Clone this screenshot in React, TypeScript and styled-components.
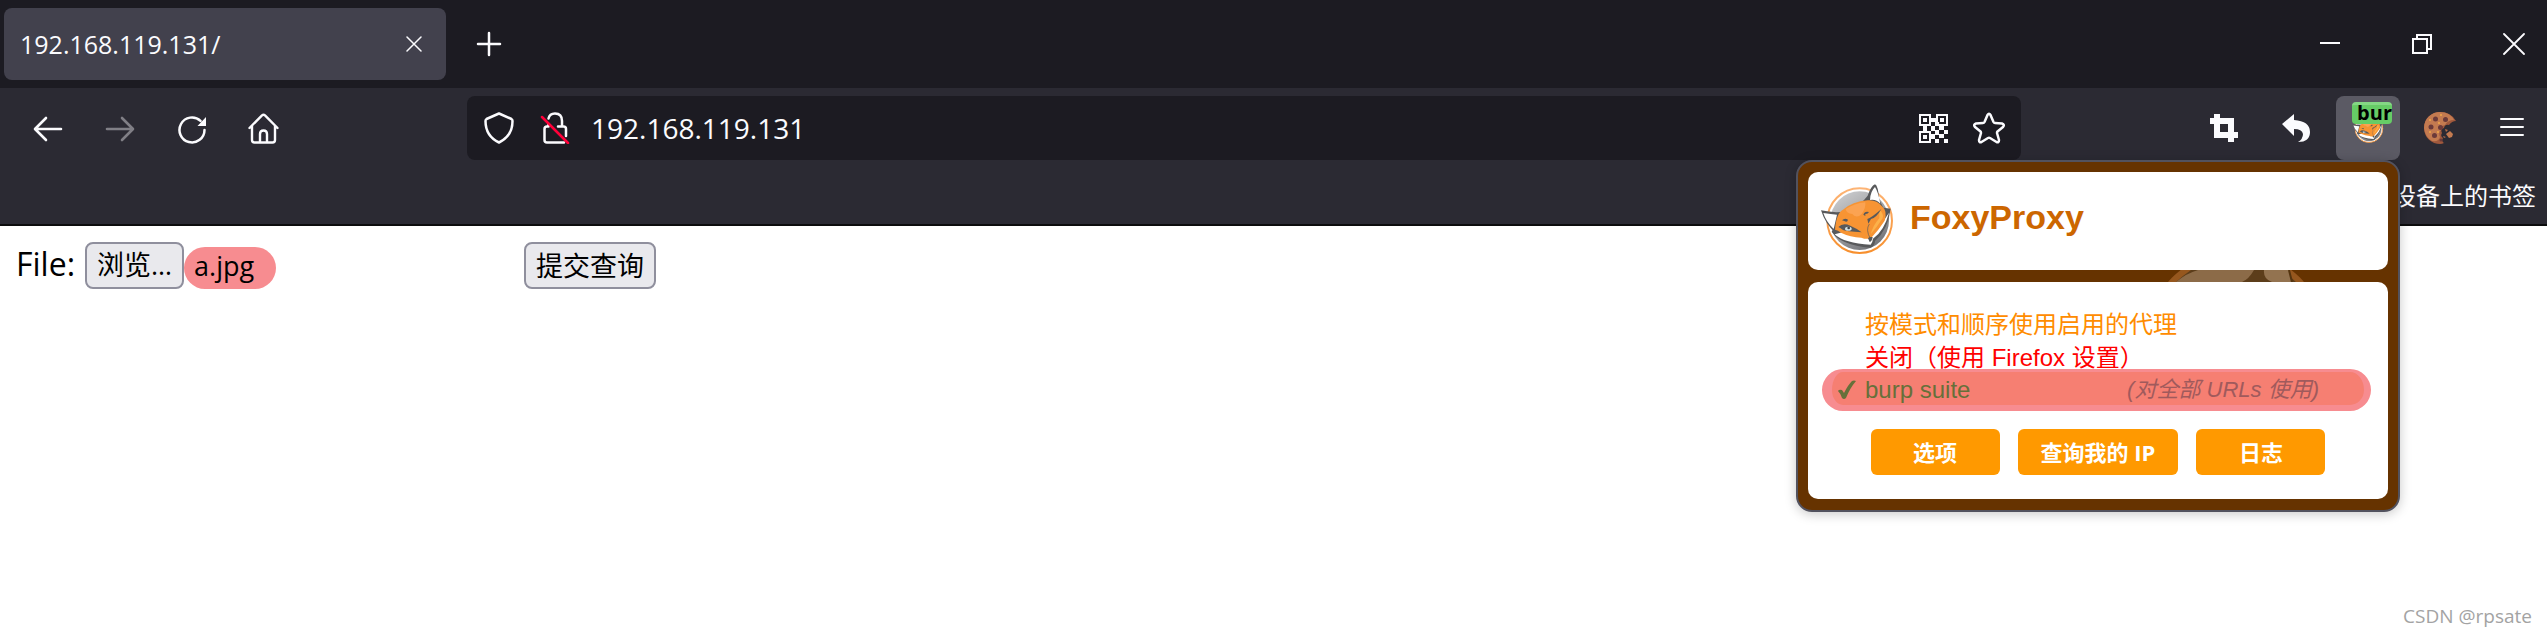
import React from "react";
import styled, { createGlobalStyle } from "styled-components";

const GlobalStyle = createGlobalStyle`
  *, *::before, *::after { box-sizing: border-box; }
  body {
    margin: 0;
    background: #ffffff;
    font-family: "Open Sans", "Noto Sans CJK SC", sans-serif;
  }
  button, input { font: inherit; }
`;

const Window = styled.div`
  display: flex;
  flex-direction: column;
  min-height: 100vh;
  overflow: hidden;
`;

const TabBar = styled.header`
  display: flex;
  align-items: center;
  height: 88px;
  padding-left: 4px;
  background: #1c1b22;
  color: #fbfbfe;
`;

const Tab = styled.div`
  display: flex;
  align-items: center;
  justify-content: space-between;
  width: 442px;
  height: 72px;
  margin-right: 11px;
  padding: 0 12px 0 16px;
  border-radius: 8px;
  background: #42414d;
  font-size: 25px;
  line-height: 32px;
`;

const IconButton = styled.button<{ $width?: number; $active?: boolean; $dim?: boolean }>`
  display: flex;
  flex: none;
  align-items: center;
  justify-content: center;
  width: ${(p) => p.$width ?? 64}px;
  height: 64px;
  padding: 0;
  border: 0;
  border-radius: 8px;
  background: ${(p) => (p.$active ? "#5b5a64" : "transparent")};
  color: ${(p) => (p.$dim ? "#807f86" : "#fbfbfe")};
`;

const WindowControls = styled.div`
  display: flex;
  gap: 26px;
  margin-left: auto;
`;

const Toolbar = styled.nav`
  display: flex;
  align-items: center;
  gap: 8px;
  height: 80px;
  padding: 0 3px 0 16px;
  background: #2b2a33;
`;

const Spacer = styled.div`
  flex: 0 1 155px;
`;

const UrlBar = styled.div`
  display: flex;
  flex: 1;
  align-items: center;
  min-width: 400px;
  height: 64px;
  padding: 0 4px;
  border-radius: 8px;
  background: #1c1b22;
`;

const UrlInput = styled.input`
  flex: 1;
  min-width: 0;
  padding: 0 8px;
  border: 0;
  outline: 0;
  background: transparent;
  color: #fbfbfe;
  font-size: 28px;
`;

const Extension = styled.div`
  position: relative;
`;

const Badge = styled.span`
  position: absolute;
  top: 6px;
  right: 8px;
  width: 40px;
  height: 22px;
  border-top: 3px solid #84d884;
  border-radius: 4px;
  background: #66cc66;
  color: #000000;
  font-size: 20px;
  font-weight: 700;
  line-height: 16px;
  text-align: right;
  pointer-events: none;
`;

const BookmarkBar = styled.div`
  display: flex;
  align-items: center;
  justify-content: flex-end;
  height: 58px;
  padding-right: 11px;
  border-bottom: 2px solid #0c0c0d;
  background: #2b2a33;
`;

const Bookmark = styled.a`
  color: #fbfbfe;
  font-size: 24px;
  line-height: 56px;
  text-decoration: none;
`;

const Page = styled.main`
  display: flex;
  flex: 1;
  flex-direction: column;
  justify-content: space-between;
  padding: 16px 15px 0 16px;
`;

const UploadForm = styled.form`
  display: flex;
  align-items: center;
  gap: 10px;
`;

const FieldName = styled.label`
  font-size: 32px;
  line-height: 42px;
  padding-bottom: 4px;
`;

const FilePicker = styled.div`
  position: relative;
  display: flex;
  align-items: flex-end;
  width: 429px;
`;

const HiddenFile = styled.input`
  position: absolute;
  inset: 0;
  width: 100%;
  opacity: 0;
`;

const FormButton = styled.button`
  height: 47px;
  padding: 0 10px;
  border: 2px solid #8f8f9d;
  border-radius: 8px;
  background: #e9e9ed;
  color: #000000;
  font-size: 27px;
  line-height: 42px;
  white-space: nowrap;
`;

const FileName = styled.span`
  height: 42px;
  padding: 0 22px 0 10px;
  border-radius: 21px;
  background: #f78c90;
  font-size: 27px;
  line-height: 38px;
`;

const Credit = styled.footer`
  align-self: flex-end;
  color: #a3a3a3;
  font-size: 19px;
  line-height: 42px;
`;

const Popup = styled.section`
  position: absolute;
  z-index: 2;
  top: 64px;
  right: 0;
  width: 604px;
  padding: 10px 10px 11px;
  border: 2px solid #52525e;
  border-radius: 16px;
  background: #663300;
  box-shadow: 0 2px 12px rgba(0, 0, 0, 0.22);
  color: #333333;
  font-family: "Liberation Sans", "Noto Sans CJK SC", sans-serif;
  font-size: 24px;
`;

const PopupHeader = styled.header`
  display: flex;
  align-items: flex-start;
  gap: 15px;
  height: 98px;
  padding: 11px 12px;
  border-radius: 10px;
  background: #ffffff;
`;

const PopupTitle = styled.h1`
  margin: 0;
  color: #cc6600;
  font-size: 34px;
  line-height: 68px;
`;

const Divider = styled.div`
  display: flex;
  justify-content: flex-end;
  height: 12px;
  padding-right: 82px;
`;

const PopupBody = styled.div`
  padding: 26px 17px 24px 14px;
  border-radius: 10px;
  background: #ffffff;
`;

const ModeList = styled.ul`
  margin: 0;
  padding: 0;
  list-style: none;
`;

const Mode = styled.button<{ $color: string }>`
  display: block;
  height: 33px;
  padding: 0 0 0 43px;
  border: 0;
  background: transparent;
  color: ${(p) => p.$color};
  line-height: 33px;
  white-space: nowrap;
`;

const SelectedMode = styled.button`
  display: flex;
  align-items: center;
  width: 100%;
  height: 42px;
  margin-top: -5px;
  padding: 2px 45px 0 5px;
  border: solid #f78c90;
  border-width: 3px 7px 6px 10px;
  border-radius: 21px;
  background: #f67f72;
  color: #66703a;
  line-height: 31px;
`;

const CheckSlot = styled.span`
  display: flex;
  width: 28px;
`;

const Note = styled.em`
  margin-left: auto;
  color: #a05a5c;
  font-size: 22px;
`;

const Actions = styled.div`
  display: flex;
  justify-content: center;
  gap: 18px;
  margin-top: 18px;
  padding-left: 3px;
`;

const Action = styled.button`
  min-width: 129px;
  height: 46px;
  padding: 0 23px;
  border: 0;
  border-radius: 6px;
  background: #ff9900;
  color: #ffffff;
  font-family: "Open Sans", "Noto Sans CJK SC", sans-serif;
  font-size: 22px;
  font-weight: 700;
  line-height: 46px;
  white-space: nowrap;
`;

type IconProps = { size?: number; width?: number; children: React.ReactNode };

const Icon = ({ size = 32, width = 2, children }: IconProps) => (
  <svg
    width={size}
    height={size}
    viewBox={`0 0 ${size} ${size}`}
    fill="none"
    stroke="currentColor"
    strokeWidth={width}
    strokeLinecap="round"
    strokeLinejoin="round"
    aria-hidden="true"
  >
    {children}
  </svg>
);

const FoxLogo = ({ width, height, id }: { width: number; height: number; id: string }) => (
  <svg width={width} height={height} viewBox="15 10 225 216" aria-hidden="true">
    <defs>
      <linearGradient id={`${id}-disc`} x1="0" y1="0" x2="0.6" y2="1">
        <stop offset="0" stopColor="#d4d5d7" />
        <stop offset="1" stopColor="#77787c" />
      </linearGradient>
      <linearGradient id={`${id}-ring`} x1="0" y1="0" x2="0" y2="1">
        <stop offset="0" stopColor="#fdb475" />
        <stop offset="1" stopColor="#f78f2d" />
      </linearGradient>
    </defs>
    <circle cx="134" cy="123" r="97" fill="#fff" stroke={`url(#${id}-ring)`} strokeWidth="6" />
    <circle cx="134" cy="123" r="88" fill={`url(#${id}-disc)`} />
    <path d="M18 92Q48 99 78 97L88 108L60 158Q31 133 18 92Z" fill="#58595b" />
    <path d="M25 100Q48 103 66 105L56 148Q33 126 25 100Z" fill="#fff" />
    <path d="M137 70Q148 61 158 48Q168 19 180 14Q189 17 193 60L205 84Z" fill="#58595b" />
    <path d="M165 61Q166 35 180 22Q190 38 196 72Q184 58 165 61Z" fill="#fff" />
    <path d="M50 156Q76 196 166 204Q180 200 180 184Q219 150 227 87L206 84L68 130Z" fill="#58595b" />
    <path d="M59 164Q87 191 167 195Q173 188 174 177Q208 153 222 99L208 120L168 164L94 155Z" fill="#fff" />
    <path d="M60 150Q64 99 84 90Q112 66 158 62Q186 60 201 80Q218 94 209 123Q191 151 169 174Q157 181 139 174Q106 173 78 159Q69 151 60 150Z" fill="#f79433" />
    <path d="M92 88Q118 71 151 68Q153 86 140 103Q125 118 112 103Q94 101 92 88Z" fill="#fba65a" opacity=".8" />
    <path d="M193 91Q207 101 203 116Q184 145 167 164Q174 137 193 116Z" fill="#fcb14a" />
    <path d="M70 142Q84 128 106 138Q127 147 140 158Q118 157 102 155Q82 153 77 146Z" fill="#58595b" />
    <ellipse cx="100" cy="147" rx="10" ry="6" fill="#d1e0e3" />
    <circle cx="101" cy="145" r="4" fill="#424547" />
    <path d="M81 122Q89 114 99 120Q97 130 88 124M145 105Q149 93 162 97Q158 104 151 103L151 109ZM157 118Q170 114 199 88Q184 115 168 118L160 132ZM159 176Q162 171 173 172Q171 185 164 187Z" fill="#58595b" />
    <path d="M163 133Q151 150 166 177" stroke="#58595b" strokeWidth="2" fill="none" />
  </svg>
);

const QrIcon = () => (
  <svg width="29" height="29" viewBox="0 0 29 29" fill="currentColor" aria-hidden="true">
    <path
      fillRule="evenodd"
      d="M0 0H12V12H0ZM2 2V10H10V2ZM17 0H29V12H17ZM19 2V10H27V2ZM0 17H12V29H0ZM2 19V27H10V19Z"
    />
    <path d="M4 4h4v4H4zM21 4h4v4h-4zM4 21h4v4H4zM12 4h5v4h-5zM4 12h4v5H4zM12 12h4v5h-4zM16 8h4v4h-4zM20 12h5v4h-5zM25 16h4v4h-4zM16 16h4v5h-4zM12 20h4v5h-4zM20 20h5v4h-5zM16 25h4v4h-4zM25 25h4v4h-4z" />
  </svg>
);

const CookieIcon = () => (
  <svg width="32" height="32" viewBox="0 0 32 32" aria-hidden="true">
    <path d="M16 0C8 0 0 6 0 16S8 32 16 32Q18 32 20 31Q17 29 19 26Q16 24 18 21Q16 17 20 16Q21 12 25 13Q28 9 32 9Q27 0 16 0Z" fill="#9f583c" />
    <path d="M16 0C8 0 0 6 0 16Q1 25 8 29Q15 30 16 25Q14 21 17 18Q16 14 21 13Q24 8 30 8Q26 0 16 0Z" fill="#c37a50" />
    <g fill="#6b3a3a">
      <circle cx="11.5" cy="7" r="2.5" />
      <circle cx="21.5" cy="7.5" r="2.5" />
      <circle cx="7" cy="15" r="2.5" />
      <circle cx="16.5" cy="15.5" r="2.5" />
      <circle cx="10.5" cy="23.5" r="2.5" />
      <circle cx="17" cy="28" r="1.5" />
    </g>
    <g fill="#f0a848">
      <circle cx="6" cy="8" r="1" />
      <circle cx="17" cy="3" r="1" />
      <circle cx="15" cy="11" r="1" />
      <circle cx="6" cy="20" r="1" />
      <circle cx="14" cy="20" r="1" />
    </g>
    <path d="M22 22L26 19L29 22L28 25L25 26Z" fill="#c37a50" />
    <path d="M21 17L24 18L22 20ZM19 24L22 25L20 26Z" fill="#b56c48" />
  </svg>
);

const FoxyProxyPopup = () => (
  <Popup aria-label="FoxyProxy">
    <PopupHeader>
      <FoxLogo width={75} height={72} id="popup-fox" />
      <PopupTitle>FoxyProxy</PopupTitle>
    </PopupHeader>
    <Divider>
      <svg width="140" height="12" viewBox="0 0 140 12" aria-hidden="true">
        <circle cx="70" cy="71" r="90" fill="#96571e" />
        <circle cx="70" cy="71" r="84" fill="#5c3d1a" />
        <path d="M10 12Q21 3 32 0H88Q83 9 76 12Z" fill="#8c6b48" />
        <path d="M98 0H123L126 12H106Q97 9 98 0Z" fill="#937350" />
        <path d="M123 0L126 12" stroke="#54340f" strokeWidth="2" />
      </svg>
    </Divider>
    <PopupBody>
      <ModeList>
        <li><Mode type="button" $color="#ff8c00">按模式和顺序使用启用的代理</Mode></li>
        <li><Mode type="button" $color="#ff0000">关闭（使用 Firefox 设置）</Mode></li>
        <li>
          <SelectedMode type="button">
            <CheckSlot>
              <svg width="20" height="20" viewBox="0 0 20 20" fill="#66703a" aria-hidden="true">
                <path d="M1 11Q2 9 5 10L7 13Q11 5 15 1Q17 0 19 1Q13 8 9 18Q7 20 5 18Q4 14 1 11Z" />
              </svg>
            </CheckSlot>
            burp suite
            <Note>(对全部 URLs 使用)</Note>
          </SelectedMode>
        </li>
      </ModeList>
      <Actions>
        <Action type="button">选项</Action>
        <Action type="button">查询我的 IP</Action>
        <Action type="button">日志</Action>
      </Actions>
    </PopupBody>
  </Popup>
);

export default function App() {
  return (
    <>
      <GlobalStyle />
      <Window>
        <TabBar>
          <Tab>
            <span>192.168.119.131/</span>
            <IconButton $width={40} aria-label="关闭标签页">
              <Icon size={16} width={1.5}><path d="M1 1L15 15M15 1L1 15" /></Icon>
            </IconButton>
          </Tab>
          <IconButton aria-label="新建标签页">
            <Icon size={26} width={2.5}><path d="M13 2V24M2 13H24" /></Icon>
          </IconButton>
          <WindowControls>
            <IconButton $width={66} aria-label="最小化">
              <Icon size={20}><path d="M0 9H20" strokeLinecap="butt" /></Icon>
            </IconButton>
            <IconButton $width={66} aria-label="还原">
              <Icon size={20}>
                <path d="M1 5H15V19H1ZM5 5V1H19V15H15" strokeLinejoin="miter" strokeLinecap="butt" />
              </Icon>
            </IconButton>
            <IconButton $width={66} aria-label="关闭">
              <Icon size={22} width={1.8}><path d="M1 1L21 21M21 1L1 21" /></Icon>
            </IconButton>
          </WindowControls>
        </TabBar>

        <Toolbar>
          <IconButton aria-label="后退">
            <Icon width={2.6}><path d="M29 17H4M14 6L3 17L14 28" /></Icon>
          </IconButton>
          <IconButton aria-label="前进" $dim>
            <Icon width={2.6}><path d="M3 17H28M18 6L29 17L18 28" /></Icon>
          </IconButton>
          <IconButton aria-label="重新载入">
            <Icon width={2.5}>
              <path d="M28.5 18A12.5 12.5 0 1 1 24.5 8.8" />
              <path d="M30 5V14H21.5Z" fill="currentColor" stroke="none" />
            </Icon>
          </IconButton>
          <IconButton aria-label="主页">
            <Icon width={2.4}>
              <path d="M1.5 16L14 3.3Q15.5 2 17 3.3L29.5 16M4 14V28Q4 30.5 6.5 30.5H24.5Q27 30.5 27 28V14M12 30V22Q12 18.5 15.5 18.5Q19 18.5 19 22V30" />
            </Icon>
          </IconButton>
          <Spacer />
          <UrlBar>
            <IconButton $width={56} aria-label="跟踪保护">
              <Icon width={2.5}>
                <path d="M16 1.5L28.5 7Q29.5 7.5 29.5 9Q29.5 24 16 30.5Q2.5 24 2.5 9Q2.5 7.5 3.5 7Z" />
              </Icon>
            </IconButton>
            <IconButton $width={56} aria-label="连接不安全">
              <Icon width={2.5}>
                <path d="M9.5 6.5Q10.5 1.5 16 1.5Q23 1.5 23 9V14.5M19 14.5H24.5Q27 14.5 27 17V24M9.5 12V14.5H8Q5.5 14.5 5.5 17V28Q5.5 30.5 8 30.5H25" />
                <path d="M3 5L29 31" stroke="#ff0039" />
              </Icon>
            </IconButton>
            <UrlInput aria-label="地址" defaultValue="192.168.119.131" />
            <IconButton $width={56} aria-label="二维码"><QrIcon /></IconButton>
            <IconButton $width={56} aria-label="添加书签">
              <Icon width={2.5}>
                <path d="M14.5 3Q16 .5 17.5 3L20.5 10Q21 11 22 11L29 11.5Q32 12.5 30 15L24.5 19.5Q24 20 24 21L26 28Q26 31 23.5 30L17 26Q16 25.5 15 26L8.5 30Q6 31 6 28L8 21Q8 20 7.5 19.5L2 15Q0 12.5 3 11.5L10 11Q11 11 11.5 10Z" />
              </Icon>
            </IconButton>
          </UrlBar>
          <Spacer />
          <IconButton aria-label="截图">
            <svg width="28" height="28" viewBox="0 0 28 28" fill="currentColor" aria-hidden="true">
              <path fillRule="evenodd" d="M4 0H10V4H24V18H28V24H24V28H18V24H4V10H0V4H4ZM10 10V18H18V10Z" />
            </svg>
          </IconButton>
          <IconButton aria-label="撤销">
            <svg width="28" height="28" viewBox="0 0 28 28" fill="currentColor" aria-hidden="true">
              <path d="M0 10L12 0V6Q28 7 28 18Q28 28 16 28Q21 25 21 20Q20 15 12 15V22Z" />
            </svg>
          </IconButton>
          <Extension>
            <IconButton $active aria-label="FoxyProxy" aria-expanded="true">
              <FoxLogo width={32} height={32} id="toolbar-fox" />
            </IconButton>
            <Badge>bur</Badge>
            <FoxyProxyPopup />
          </Extension>
          <IconButton aria-label="Cookie"><CookieIcon /></IconButton>
          <IconButton aria-label="菜单">
            <Icon size={24}><path d="M1 3H23M1 11H23M1 19H23" /></Icon>
          </IconButton>
        </Toolbar>

        <BookmarkBar>
          <Bookmark href="#bookmarks">移动设备上的书签</Bookmark>
        </BookmarkBar>

        <Page>
          <UploadForm onSubmit={(e) => e.preventDefault()}>
            <FieldName htmlFor="upload">File:</FieldName>
            <FilePicker>
              <FormButton as="span">浏览…</FormButton>
              <FileName>a.jpg</FileName>
              <HiddenFile id="upload" type="file" />
            </FilePicker>
            <FormButton type="submit">提交查询</FormButton>
          </UploadForm>
          <Credit>CSDN @rpsate</Credit>
        </Page>
      </Window>
    </>
  );
}
